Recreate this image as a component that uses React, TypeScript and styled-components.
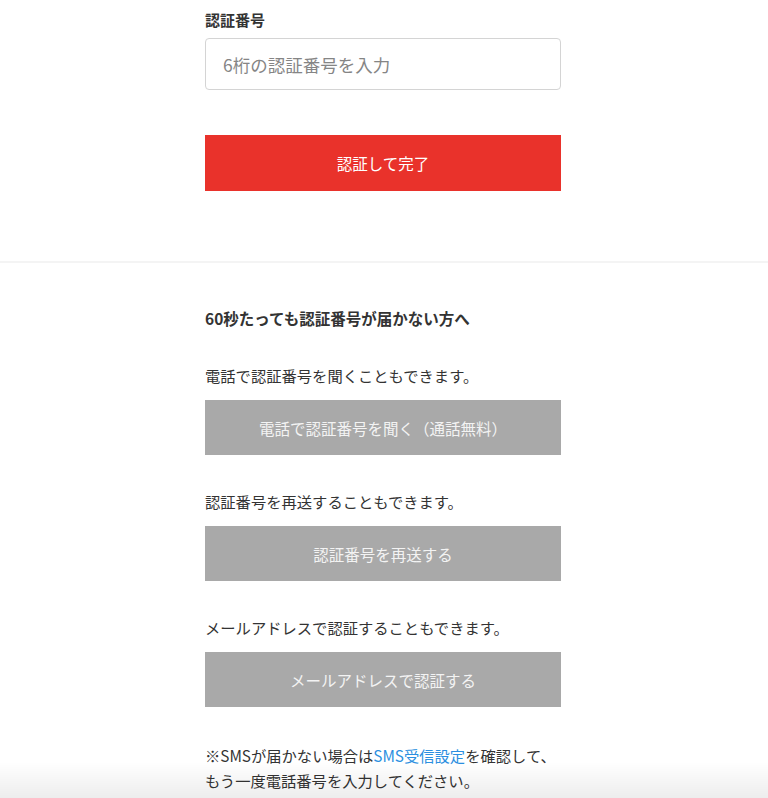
import React from "react";
import styled, { createGlobalStyle } from "styled-components";

const GlobalStyle = createGlobalStyle`
  html, body {
    margin: 0;
    padding: 0;
    background: #ffffff;
  }
  body {
    font-family: "Noto Sans CJK JP", "Noto Sans", sans-serif;
    color: #333333;
  }
  * { box-sizing: border-box; }
`;

const Page = styled.main`
  display: flex;
  flex-direction: column;
  width: 100%;
`;

const Section = styled.section<{ $divider?: boolean; $top: number; $bottom: number }>`
  padding: ${(p) => p.$top}px 0 ${(p) => p.$bottom}px;
  border-bottom: ${(p) => (p.$divider ? "2px solid #f4f4f4" : "none")};
`;

const Column = styled.div`
  width: 356px;
  margin-left: calc(50% - 179px);
  display: flex;
  flex-direction: column;
`;

const Label = styled.label`
  font-size: 15px;
  font-weight: 700;
  line-height: 22px;
  margin-bottom: 7px;
`;

const Input = styled.input`
  height: 52px;
  width: 100%;
  border: 1.5px solid #d4d4d4;
  border-radius: 4px;
  padding: 0 17px;
  font-family: inherit;
  font-size: 17.5px;
  color: #333;
  outline: none;
  &::placeholder {
    color: #858585;
  }
`;

const Button = styled.button<{ $variant: "primary" | "muted"; $mt: number }>`
  margin-top: ${(p) => p.$mt}px;
  height: ${(p) => (p.$variant === "primary" ? 56 : 55)}px;
  width: 100%;
  border: none;
  border-radius: 0;
  background: ${(p) => (p.$variant === "primary" ? "#e9322b" : "#a9a9a9")};
  color: ${(p) => (p.$variant === "primary" ? "#ffffff" : "#f3f3f3")};
  font-family: inherit;
  font-size: 15.5px;
  font-weight: 400;
  display: flex;
  align-items: center;
  justify-content: center;
  cursor: pointer;
`;

const Heading = styled.h2`
  margin: 0;
  font-size: 15.5px;
  font-weight: 700;
  line-height: 22px;
`;

const Text = styled.p<{ $mt: number }>`
  margin: ${(p) => p.$mt}px 0 0;
  font-size: 15.3px;
  line-height: 22px;
`;

const Note = styled.p`
  margin: 36px 0 0;
  font-size: 15.3px;
  line-height: 25px;
`;

const Link = styled.a`
  color: #2b8fe0;
  text-decoration: none;
`;

const BottomShade = styled.div`
  position: fixed;
  left: 0;
  right: 0;
  bottom: 0;
  height: 36px;
  pointer-events: none;
  background: linear-gradient(to bottom, rgba(0, 0, 0, 0), rgba(0, 0, 0, 0.07));
`;

export default function App() {
  return (
    <>
      <GlobalStyle />
      <Page>
        <Section $divider $top={9} $bottom={70}>
          <Column>
            <Label htmlFor="code">認証番号</Label>
            <Input id="code" placeholder="6桁の認証番号を入力" />
            <Button $variant="primary" $mt={45}>
              認証して完了
            </Button>
          </Column>
        </Section>
        <Section $top={44} $bottom={20}>
          <Column>
            <Heading>60秒たっても認証番号が届かない方へ</Heading>
            <Text $mt={35}>電話で認証番号を聞くこともできます。</Text>
            <Button $variant="muted" $mt={14}>
              電話で認証番号を聞く（通話無料）
            </Button>
            <Text $mt={35}>認証番号を再送することもできます。</Text>
            <Button $variant="muted" $mt={14}>
              認証番号を再送する
            </Button>
            <Text $mt={35}>メールアドレスで認証することもできます。</Text>
            <Button $variant="muted" $mt={14}>
              メールアドレスで認証する
            </Button>
            <Note>
              ※SMSが届かない場合は<Link href="#">SMS受信設定</Link>を確認して、
              <br />
              もう一度電話番号を入力してください。
            </Note>
          </Column>
        </Section>
      </Page>
      <BottomShade />
    </>
  );
}
